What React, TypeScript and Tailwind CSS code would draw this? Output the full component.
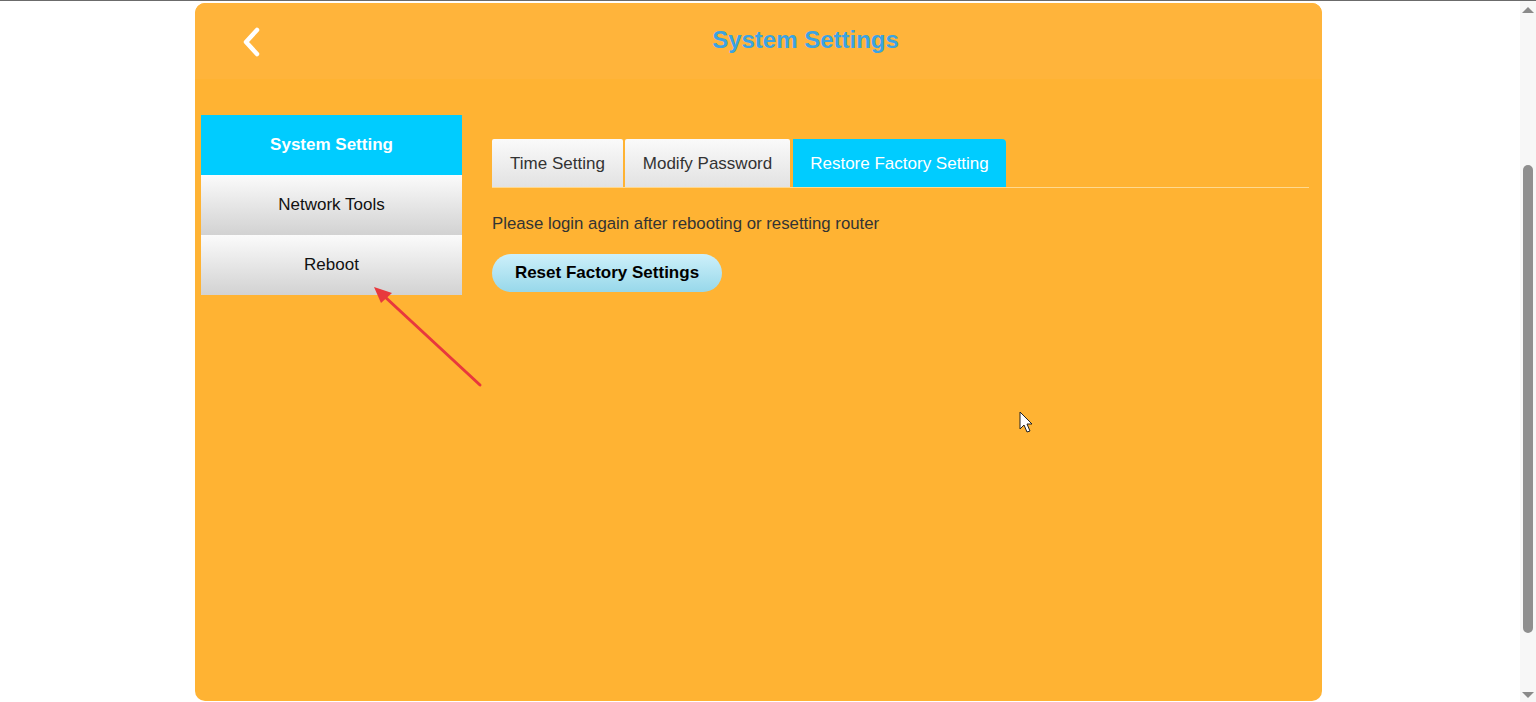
const menuItems = ["System Setting", "Network Tools", "Reboot"]

const tabs = [
  { label: "Time Setting", width: "w-[131px]" },
  { label: "Modify Password", width: "w-[165px]" },
  { label: "Restore Factory Setting", width: "w-[213px]" },
]

function Scrollbar() {
  return (
    <div className="w-[16px] shrink-0 bg-[#f7f7f7] flex flex-col items-center">
      <div className="mt-[6px] w-0 h-0 border-l-[6px] border-r-[6px] border-b-[6px] border-l-transparent border-r-transparent border-b-[#8a8a8a]" />
      <div className="mt-[152px] w-[10px] h-[468px] rounded-full bg-[#8f8f8f]" />
      <div className="mt-auto mb-[4px] w-0 h-0 border-l-[6px] border-r-[6px] border-t-[6px] border-l-transparent border-r-transparent border-t-[#8a8a8a]" />
    </div>
  )
}

export default function App() {
  const activeMenu = 0
  const activeTab = 2

  return (
    <div
      className="relative w-[1536px] h-[702px] overflow-hidden bg-white border-t border-[#6b6b6b] flex"
      style={{ fontFamily: '"Liberation Sans", Arial, sans-serif' }}
    >
      <div className="flex-1 pl-[195px] pt-[2px]">
        <div className="w-[1127px] h-[698px] rounded-[10px] bg-[#ffb333] overflow-hidden flex flex-col">
          {/* header */}
          <div className="h-[76px] bg-[#ffb43b] flex items-center shrink-0">
            <div className="w-[94px] flex justify-end pr-[25px]">
              <svg width="24" height="32" viewBox="0 0 24 32" className="mt-[2px]">
                <polyline
                  points="17,4 6,16 17,28"
                  fill="none"
                  stroke="white"
                  strokeWidth="4.5"
                  strokeLinecap="round"
                  strokeLinejoin="round"
                />
              </svg>
            </div>
            <h1 className="flex-1 text-center text-[24px] font-bold text-[#3ba3e3] pb-[2px]">
              System Settings
            </h1>
          </div>

          {/* body */}
          <div className="flex pl-[6px] pt-[36px] pr-[13px]">
            <div className="w-[261px] flex flex-col shrink-0">
              {menuItems.map((item, i) => (
                <div
                  key={item}
                  className={`h-[60px] flex items-center justify-center text-[17px] ${
                    i === activeMenu
                      ? "bg-[#00ccff] text-white font-bold"
                      : "bg-gradient-to-b from-[#fbfbfb] to-[#d2d2d2] text-[#111]"
                  }`}
                >
                  {item}
                </div>
              ))}
            </div>

            <div className="flex-1 ml-[30px] pt-[24px]">
              <div className="flex items-end gap-[2px] border-b border-[#ffd98f]">
                {tabs.map((tab, i) => (
                  <div
                    key={tab.label}
                    className={`${tab.width} h-[48px] flex items-center justify-center text-[17px] pt-[2px] ${
                      i === activeTab
                        ? "bg-[#00ccff] text-white rounded-tr-[4px] ml-[1px]"
                        : "bg-gradient-to-b from-[#fafafa] to-[#e2e2e2] text-[#333] rounded-t-[2px]"
                    }`}
                  >
                    {tab.label}
                  </div>
                ))}
              </div>
              <p className="mt-[23px] text-[16.8px] text-[#333]">
                Please login again after rebooting or resetting router
              </p>
              <button className="mt-[18px] w-[230px] h-[38px] rounded-full bg-gradient-to-b from-[#cdf0fa] to-[#97d8ea] text-[17px] font-bold text-black">
                Reset Factory Settings
              </button>
            </div>
          </div>
        </div>
      </div>

      <Scrollbar />

      {/* annotation arrow */}
      <svg className="absolute left-0 top-0 pointer-events-none" width="1536" height="702">
        <line x1="480" y1="384" x2="384" y2="295" stroke="#e8383d" strokeWidth="3" strokeLinecap="round" />
        <polygon points="374,286 392,292 381,302" fill="#e8383d" />
      </svg>

      {/* mouse pointer */}
      <svg className="absolute left-[1019px] top-[410px] pointer-events-none" width="16" height="24" viewBox="0 0 16 24">
        <path d="M1 1 L1 18 L5 14 L8 21 L11 20 L8 13 L13 13 Z" fill="white" stroke="#222" strokeWidth="1" strokeLinejoin="round" />
      </svg>
    </div>
  )
}
